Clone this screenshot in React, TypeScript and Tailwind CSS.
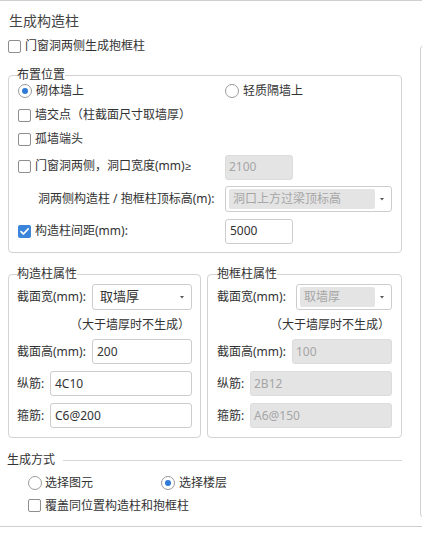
import React from "react";

function Checkbox({ checked = false }: { checked?: boolean }) {
  if (checked) {
    return (
      <span className="w-[13px] h-[13px] shrink-0 rounded-[2px] bg-[#3a84db] flex items-center justify-center">
        <svg width="11" height="11" viewBox="0 0 11 11">
          <path d="M2 5.6 L4.4 8 L9.2 2.8" fill="none" stroke="#fff" strokeWidth="1.7" strokeLinecap="round" strokeLinejoin="round" />
        </svg>
      </span>
    );
  }
  return <span className="w-[13px] h-[13px] shrink-0 rounded-[2px] border border-[#8e8e8e] bg-white" />;
}

function Radio({ checked = false }: { checked?: boolean }) {
  return (
    <span className="w-[14px] h-[14px] shrink-0 rounded-full border border-[#9a9a9a] bg-white flex items-center justify-center">
      {checked && <span className="w-[6px] h-[6px] rounded-full bg-[#2f7ad6]" />}
    </span>
  );
}

function Input({ value, disabled = false, className = "" }: { value: string; disabled?: boolean; className?: string }) {
  return (
    <div
      className={
        "h-[25px] rounded-[3px] border flex items-center " +
        (disabled
          ? "bg-[#e4e4e4] border-[#dcdcdc] text-[#a6a6a6] pl-[3px] "
          : "bg-white border-[#cdcdcd] text-[#333] pl-[4px] ") +
        className
      }
    >
      {value}
    </div>
  );
}

function Select({ value, disabled = false, className = "" }: { value: string; disabled?: boolean; className?: string }) {
  return (
    <div className={"h-[26px] rounded-[3px] border border-[#cdcdcd] bg-white flex items-center pl-[3px] pr-[5px] py-[2px] " + className}>
      <div
        className={
          "flex-1 h-full rounded-[2px] flex items-center pl-[4px] " +
          (disabled ? "bg-[#e4e4e4] text-[#a6a6a6]" : "text-[#333] text-[13px]")
        }
      >
        {value}
      </div>
      <svg width="8" height="8" viewBox="0 0 8 8" className="ml-[3px]">
        <path d="M2 3 L6 3 L4 5.5 Z" fill="#555" />
      </svg>
    </div>
  );
}

export default function App() {
  return (
    <div
      className="w-[422px] h-[552px] overflow-hidden bg-white text-[12px] text-[#333]"
      style={{ fontFamily: '"Noto Sans", "Noto Sans CJK SC", sans-serif' }}
    >
      <div className="flex h-[527px] border-t border-b border-[#cfcfcf]">
        <div className="w-[420px] shrink-0 pl-[8px]">
          <div className="mt-[10px] ml-[1px] h-[20px] leading-[20px] text-[14px] text-[#444]">生成构造柱</div>
          <div className="mt-[3px] h-[24px] flex items-center gap-[4px]">
            <Checkbox />
            <span>门窗洞两侧生成抱框柱</span>
          </div>

          <fieldset className="mt-[9px] w-[394px] border border-[#d3d3d3] rounded-[4px] px-[9px] pb-[5px]">
            <legend className="leading-[16px] -ml-[1px] px-0">布置位置</legend>
            <div className="-mt-[4px] h-[24px] grid grid-cols-[207px_1fr] items-center">
              <div className="flex items-center gap-[4px]">
                <Radio checked />
                <span>砌体墙上</span>
              </div>
              <div className="flex items-center gap-[4px]">
                <Radio />
                <span>轻质隔墙上</span>
              </div>
            </div>
            <div className="h-[24px] flex items-center gap-[4px]">
              <Checkbox />
              <span>墙交点（柱截面尺寸取墙厚）</span>
            </div>
            <div className="h-[24px] flex items-center gap-[4px]">
              <Checkbox />
              <span>孤墙端头</span>
            </div>
            <div className="h-[32px] grid grid-cols-[207px_1fr] items-center">
              <div className="flex items-center gap-[4px] -mt-[2px]">
                <Checkbox />
                <span>
                  门窗洞两侧，洞口宽度(mm)<span className="font-['Liberation_Sans',sans-serif] text-[11px]">≥</span>
                </span>
              </div>
              <Input value="2100" disabled className="w-[68px]" />
            </div>
            <div className="h-[32px] grid grid-cols-[207px_1fr] items-center">
              <span className="pl-[20px]">洞两侧构造柱 / 抱框柱顶标高(m):</span>
              <Select value="洞口上方过梁顶标高" disabled className="w-[167px]" />
            </div>
            <div className="h-[32px] grid grid-cols-[207px_1fr] items-center">
              <div className="flex items-center gap-[4px]">
                <Checkbox checked />
                <span>构造柱间距(mm):</span>
              </div>
              <Input value="5000" className="w-[68px]" />
            </div>
          </fieldset>

          <div className="mt-[13px] flex gap-[6px]">
            <fieldset className="w-[193px] border border-[#d3d3d3] rounded-[4px] px-[8px] pb-[9px]">
              <legend className="leading-[16px] px-0">构造柱属性</legend>
              <div className="mt-[2px] h-[26px] flex items-center">
                <span className="w-[75px] shrink-0">截面宽(mm):</span>
                <Select value="取墙厚" className="flex-1" />
              </div>
              <div className="h-[29px] flex items-center justify-end pr-[2px]">（大于墙厚时不生成）</div>
              <div className="h-[25px] flex items-center">
                <span className="w-[75px] shrink-0">截面高(mm):</span>
                <Input value="200" className="flex-1" />
              </div>
              <div className="mt-[7px] h-[25px] flex items-center">
                <span className="w-[33px] shrink-0">纵筋:</span>
                <Input value="4C10" className="flex-1" />
              </div>
              <div className="mt-[7px] h-[25px] flex items-center">
                <span className="w-[33px] shrink-0">箍筋:</span>
                <Input value="C6@200" className="flex-1" />
              </div>
            </fieldset>

            <fieldset className="w-[195px] border border-[#d3d3d3] rounded-[4px] px-[9px] pb-[9px]">
              <legend className="leading-[16px] px-0">抱框柱属性</legend>
              <div className="mt-[2px] h-[26px] flex items-center">
                <span className="w-[79px] shrink-0">截面宽(mm):</span>
                <Select value="取墙厚" disabled className="flex-1" />
              </div>
              <div className="h-[29px] flex items-center justify-end pr-[2px]">（大于墙厚时不生成）</div>
              <div className="h-[25px] flex items-center">
                <span className="w-[75px] shrink-0">截面高(mm):</span>
                <Input value="100" disabled className="flex-1" />
              </div>
              <div className="mt-[7px] h-[25px] flex items-center">
                <span className="w-[33px] shrink-0">纵筋:</span>
                <Input value="2B12" disabled className="flex-1" />
              </div>
              <div className="mt-[7px] h-[25px] flex items-center">
                <span className="w-[33px] shrink-0">箍筋:</span>
                <Input value="A6@150" disabled className="flex-1" />
              </div>
            </fieldset>
          </div>

          <div className="mt-[14px] -ml-[1px] w-[395px] h-[16px] flex items-center">
            <span className="leading-[16px]">生成方式</span>
            <span className="ml-[8px] flex-1 h-px bg-[#d6d6d6]" />
          </div>
          <div className="mt-[3px] pl-[20px] h-[23px] grid grid-cols-[133px_1fr] items-center">
            <div className="flex items-center gap-[3px]">
              <Radio />
              <span>选择图元</span>
            </div>
            <div className="flex items-center gap-[4px]">
              <Radio checked />
              <span>选择楼层</span>
            </div>
          </div>
          <div className="pl-[20px] h-[23px] flex items-center gap-[4px]">
            <Checkbox />
            <span>覆盖同位置构造柱和抱框柱</span>
          </div>
        </div>
        <div className="shrink-0 w-[30px] mt-[44px] h-[473px] border border-[#d0d0d0] rounded-[4px]" />
      </div>
    </div>
  );
}
